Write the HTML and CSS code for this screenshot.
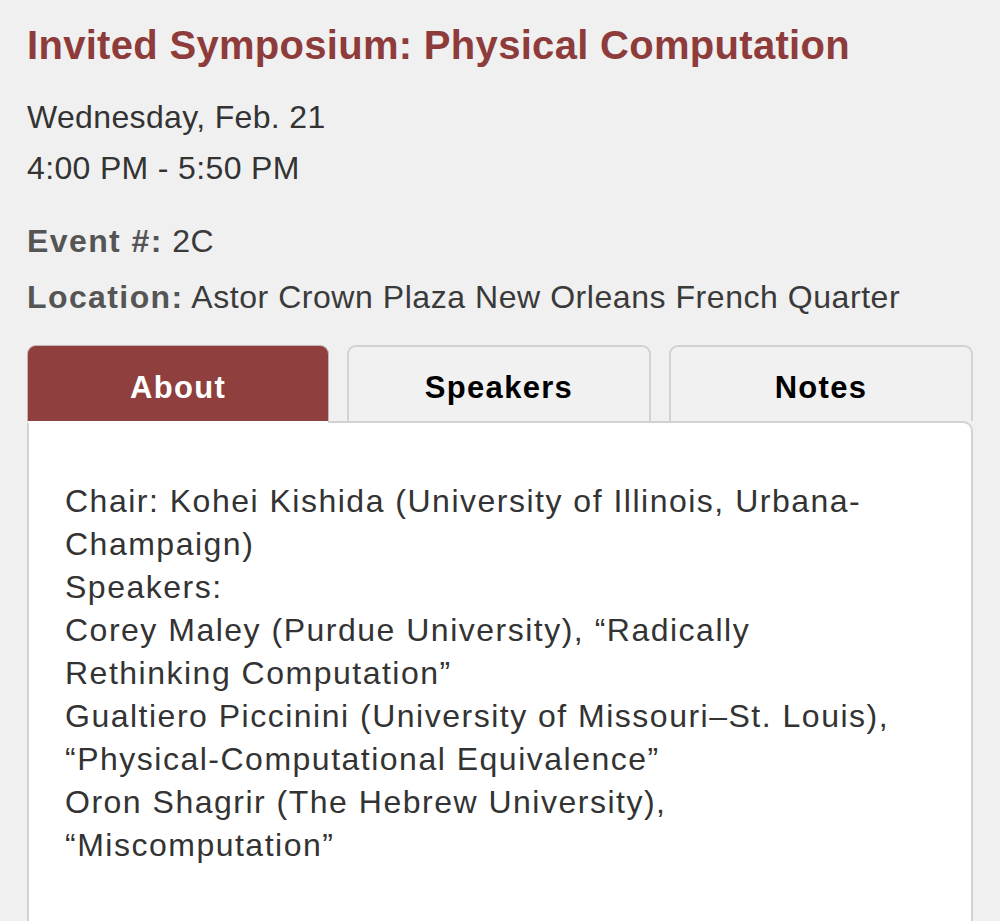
FILE: index.html
```html
<!DOCTYPE html>
<html lang="en">
<head>
<meta charset="utf-8">
<title>Invited Symposium: Physical Computation</title>
<link rel="stylesheet" href="styles.css">
</head>
<body>
<div class="page">
  <h1 class="title">Invited Symposium: Physical Computation</h1>
  <div class="when">
    <div class="when-line">Wednesday, Feb. 21</div>
    <div class="when-line">4:00 PM - 5:50 PM</div>
  </div>
  <div class="meta">
    <div class="meta-line"><span class="meta-label">Event #:</span> 2C</div>
    <div class="meta-line"><span class="meta-label">Location:</span> Astor Crown Plaza New Orleans French Quarter</div>
  </div>
  <div class="tabs">
    <div class="tab tab-active">About</div>
    <div class="tab">Speakers</div>
    <div class="tab">Notes</div>
  </div>
  <div class="panel">
    <p class="panel-text">Chair: Kohei Kishida (University of Illinois, Urbana-Champaign)<br>Speakers:<br>Corey Maley (Purdue University), “Radically Rethinking Computation”<br>Gualtiero Piccinini (University of Missouri–St. Louis), “Physical-Computational Equivalence”<br>Oron Shagrir (The Hebrew University), “Miscomputation”</p>
  </div>
</div>
</body>
</html>
```

FILE: styles.css
```css
html, body {
  margin: 0;
  padding: 0;
}
body {
  background: #f0f0f0;
  font-family: "Liberation Sans", Arial, Helvetica, sans-serif;
  color: #333;
  overflow: hidden;
}
.page {
  padding: 22px 27px 0 27px;
}
.title {
  margin: 0;
  font-size: 40px;
  line-height: 46px;
  letter-spacing: 0.3px;
  font-weight: bold;
  color: #8e3c3b;
}
.when {
  margin-top: 24px;
}
.when-line {
  font-size: 32px;
  line-height: 51px;
  letter-spacing: 0.35px;
  color: #333;
}
.meta {
  margin-top: 19px;
}
.meta-line {
  font-size: 32px;
  line-height: 56px;
  letter-spacing: 0.55px;
  color: #3a3a3a;
}
.meta-label {
  font-weight: bold;
  letter-spacing: 1.4px;
  color: #555;
}
.tabs {
  margin-top: 20px;
  display: flex;
  gap: 18px;
  align-items: flex-start;
  margin-bottom: -2px;
  position: relative;
  z-index: 1;
}
.tab {
  flex: 1;
  box-sizing: border-box;
  height: 76px;
  padding-top: 8px;
  line-height: 66px;
  text-align: center;
  font-size: 31px;
  letter-spacing: 1.3px;
  font-weight: bold;
  color: #000;
  background: #f1f1f1;
  border: 2px solid #d2d2d2;
  border-bottom: none;
  border-radius: 9px 9px 0 0;
}
.tab-active {
  height: 78px;
  background: #8e3f3e;
  color: #fff;
  border: 1px solid #c9b5b4;
  border-bottom: 2px solid #fff;
  line-height: 67px;
  padding-top: 8px;
}
.panel {
  background: #fff;
  border: 2px solid #d2d2d2;
  border-top-right-radius: 10px;
  height: 560px;
  padding: 57px 60px 0 36px;
  box-sizing: border-box;
}
.panel-text {
  margin: 0;
  font-size: 32px;
  line-height: 43px;
  letter-spacing: 1.5px;
  color: #333;
}
```
